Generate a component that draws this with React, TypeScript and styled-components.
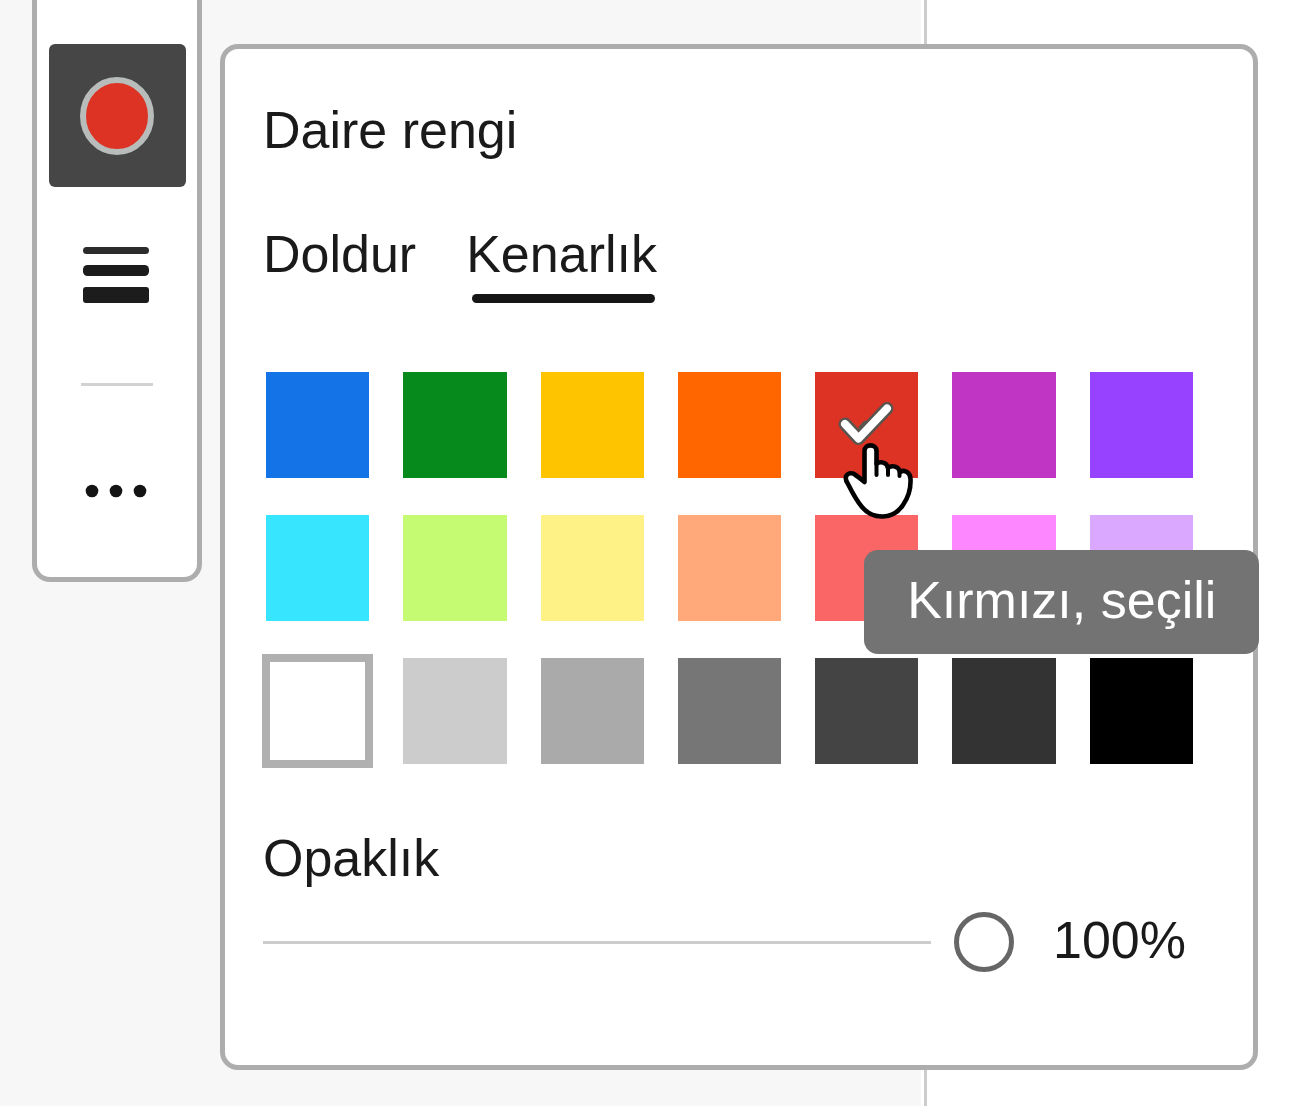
import React, { useState } from "react";
import styled, { createGlobalStyle } from "styled-components";

const GlobalStyle = createGlobalStyle`
  *, *::before, *::after { box-sizing: border-box; }
  body {
    margin: 0;
    background: #fff;
    color: #1a1a1a;
    font-family: "Liberation Sans", Arial, sans-serif;
    font-size: 52px;
    line-height: 60px;
  }
  button, input { font: inherit; color: inherit; margin: 0; }
`;

const Page = styled.main`
  display: flex;
  align-items: flex-start;
  gap: 18px;
  min-height: 100vh;
  padding: 0 38px 0 32px;
  background: linear-gradient(
    to right,
    #f7f7f7 0 921px,
    #fff 921px 924px,
    #cccccc 924px 927px,
    #fff 927px
  );
`;

const Toolbar = styled.nav`
  display: flex;
  flex-direction: column;
  align-items: center;
  flex: none;
  width: 170px;
  padding: 44px 0 15px;
  background: #fff;
  border: 5px solid #adadad;
  border-top: 0;
  border-radius: 0 0 18px 18px;
`;

const ToolButton = styled.button<{ $active?: boolean }>`
  display: grid;
  place-items: center;
  width: 137px;
  height: 143px;
  padding: 0;
  border: 0;
  border-radius: 6px;
  background: ${(p) => (p.$active ? "#464646" : "transparent")};
  cursor: pointer;

  & + & { margin-top: 16px; }
`;

const Divider = styled.hr`
  width: 72px;
  height: 3px;
  margin: 37px 0 33px;
  border: 0;
  background: #d2d2d2;
`;

const Panel = styled.section`
  flex: 1;
  min-width: 0;
  margin-top: 44px;
  padding: 51px 56px 91px 38px;
  background: #fff;
  border: 5px solid #adadad;
  border-radius: 18px;
`;

const Title = styled.h1`
  margin: 0;
  font-size: inherit;
  font-weight: 400;
`;

const Tabs = styled.div`
  display: flex;
  gap: 50px;
  margin-top: 64px;
`;

const Tab = styled.button<{ $active: boolean }>`
  padding: 0;
  border: 0;
  background: none;
  cursor: pointer;

  &::after {
    content: "";
    display: block;
    height: 9px;
    margin: 10px 2px 0 6px;
    border-radius: 5px;
    background: ${(p) => (p.$active ? "#161616" : "transparent")};
  }
`;

const Palette = styled.div`
  display: grid;
  grid-template-columns: repeat(7, 1fr);
  gap: 37px 34px;
  margin: 69px 4px 0 3px;
`;

const Cell = styled.div`
  position: relative;
  display: grid;
  height: 106px;

  > * { grid-area: 1 / 1; }
`;

const Swatch = styled.input<{ $color: string; $outlined: boolean }>`
  appearance: none;
  width: 100%;
  height: 100%;
  background: ${(p) => p.$color};
  box-shadow: ${(p) =>
    p.$outlined ? "0 0 0 4px #b0b0b0, inset 0 0 0 4px #b0b0b0" : "none"};
  cursor: pointer;
`;

const Check = styled.svg`
  place-self: center;
  pointer-events: none;
`;

const Pointer = styled.svg`
  position: absolute;
  left: 27px;
  top: 68px;
  z-index: 2;
  pointer-events: none;
`;

const Tooltip = styled.span`
  position: absolute;
  left: 49px;
  top: 178px;
  z-index: 1;
  padding: 20px 43px 24px;
  border-radius: 14px;
  background: #737373;
  color: #fff;
  white-space: nowrap;
`;

const OpacityLabel = styled.label`
  display: block;
  margin-top: 64px;
`;

const OpacityRow = styled.div`
  display: flex;
  align-items: flex-start;
  gap: 39px;
  margin-top: 22px;
  padding-right: 11px;
`;

const Slider = styled.input`
  appearance: none;
  flex: 1;
  min-width: 0;
  height: 64px;
  background: linear-gradient(#cccccc, #cccccc) center / 100% 3px no-repeat;

  &::-webkit-slider-thumb {
    appearance: none;
    width: 60px;
    height: 60px;
    border: 5px solid #666;
    border-radius: 50%;
    background: #fff;
    box-shadow: 0 0 0 23px #fff;
  }
`;

const Value = styled.output`
  flex: none;
`;

const colors: [string, string][] = [
  ["Mavi", "#1473e6"],
  ["Yeşil", "#078a1c"],
  ["Sarı", "#ffc400"],
  ["Turuncu", "#ff6600"],
  ["Kırmızı", "#dc3324"],
  ["Macenta", "#c035c3"],
  ["Mor", "#9642ff"],
  ["Açık mavi", "#38e5ff"],
  ["Açık yeşil", "#c5fb72"],
  ["Açık sarı", "#fef286"],
  ["Açık turuncu", "#ffa97a"],
  ["Açık kırmızı", "#fa6666"],
  ["Pembe", "#fc87ff"],
  ["Açık mor", "#dba8ff"],
  ["Beyaz", "#ffffff"],
  ["Açık gri", "#cccccc"],
  ["Gri", "#aaaaaa"],
  ["Orta gri", "#767676"],
  ["Koyu gri", "#444444"],
  ["Antrasit", "#333333"],
  ["Siyah", "#000000"],
];

const ColorIcon = ({ color }: { color: string }) => (
  <svg width="76" height="80" viewBox="0 0 76 80" aria-hidden="true">
    <ellipse cx="38" cy="40" rx="34" ry="36" fill={color} stroke="#b8bcbb" strokeWidth="6" />
  </svg>
);

const WeightIcon = () => (
  <svg width="68" height="56" viewBox="0 0 68 56" fill="#1c1c1c" aria-hidden="true">
    <rect y="0" width="66" height="7" rx="3.5" fill="#2c2c2c" />
    <rect y="18" width="66" height="11" rx="4.5" />
    <rect y="40" width="66" height="16" rx="3" />
  </svg>
);

const MoreIcon = () => (
  <svg width="64" height="14" viewBox="0 0 64 14" fill="#141414" aria-hidden="true">
    <circle cx="7" cy="7" r="6.3" />
    <circle cx="31" cy="7" r="6.3" />
    <circle cx="55" cy="7" r="6.3" />
  </svg>
);

const CheckIcon = () => (
  <Check width="60" height="50" viewBox="0 0 60 50" fill="none" strokeLinecap="round" strokeLinejoin="round" aria-hidden="true">
    <path d="M8 24 21.500 38.500 50 8.500" stroke="#59544f" strokeWidth="13" />
    <path d="M8 24 21.500 38.500 50 8.500" stroke="#fff" strokeWidth="8" />
    <path d="M23 27.500 28 22" stroke="#59544f" strokeWidth="3" />
  </Check>
);

const HandIcon = () => (
  <Pointer width="74" height="82" viewBox="22 50 74 82" fill="none" stroke="#000" strokeWidth="4.6" strokeLinecap="round" strokeLinejoin="round" aria-hidden="true">
    <path
      fill="#fff"
      d="M44.500 92V61C44.500 53.500 56.500 53.500 56.500 61V74C60 71 67 72 68 78C72 74.500 79 76.500 80 82C85 79 90.500 83 90.500 89C91 99 88 108 83 115C73 130 53 130 42 117C36 110 32 102 28 94C26 91 25 88 26.500 85.500C28.500 82.500 33 82.500 35.500 85C38.500 87 41 89 44.500 92Z"
    />
    <path d="M56.500 73V85M68 78V85M79.500 82V86" strokeWidth="4" />
  </Pointer>
);

export default function App() {
  const [tab, setTab] = useState("Kenarlık");
  const [selected, setSelected] = useState("Kırmızı");
  const [opacity, setOpacity] = useState(100);
  const current = colors.find(([name]) => name === selected)![1];

  return (
    <>
      <GlobalStyle />
      <Page lang="tr">
        <Toolbar aria-label="Çizim araçları">
          <ToolButton type="button" $active aria-label="Daire rengi">
            <ColorIcon color={current} />
          </ToolButton>
          <ToolButton type="button" aria-label="Çizgi kalınlığı">
            <WeightIcon />
          </ToolButton>
          <Divider />
          <ToolButton type="button" aria-label="Diğer">
            <MoreIcon />
          </ToolButton>
        </Toolbar>

        <Panel aria-labelledby="panel-title">
          <Title id="panel-title">Daire rengi</Title>
          <Tabs role="tablist">
            {["Doldur", "Kenarlık"].map((name) => (
              <Tab
                key={name}
                type="button"
                role="tab"
                aria-selected={tab === name}
                $active={tab === name}
                onClick={() => setTab(name)}
              >
                {name}
              </Tab>
            ))}
          </Tabs>

          <Palette role="radiogroup" aria-labelledby="panel-title">
            {colors.map(([name, color]) => (
              <Cell key={name}>
                <Swatch
                  type="radio"
                  name="color"
                  aria-label={name}
                  checked={selected === name}
                  onChange={() => setSelected(name)}
                  $color={color}
                  $outlined={name === "Beyaz"}
                />
                {selected === name && (
                  <>
                    <CheckIcon />
                    <HandIcon />
                    <Tooltip role="tooltip">{name}, seçili</Tooltip>
                  </>
                )}
              </Cell>
            ))}
          </Palette>

          <OpacityLabel htmlFor="opacity">Opaklık</OpacityLabel>
          <OpacityRow>
            <Slider
              id="opacity"
              type="range"
              min={0}
              max={100}
              value={opacity}
              onChange={(e) => setOpacity(Number(e.target.value))}
            />
            <Value htmlFor="opacity">{opacity}%</Value>
          </OpacityRow>
        </Panel>
      </Page>
    </>
  );
}
